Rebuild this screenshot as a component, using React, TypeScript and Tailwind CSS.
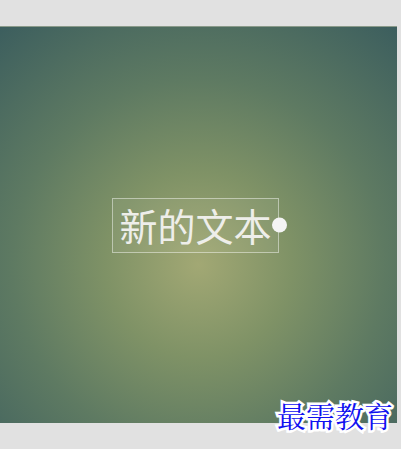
export default function App() {
  return (
    <div className="relative w-[401px] h-[449px] bg-[#e1e1e1] pt-[26px]">
      {/* Canvas */}
      <div className="w-[397px] h-[397px] flex items-center justify-center bg-[radial-gradient(circle_at_50%_60%,#a2a874_0%,#7f9266_30%,#5e7a62_60%,#3c5e5e_100%)] border-t border-[#8a9a8a]">
        <div className="relative flex items-center justify-center w-[167px] h-[55px] border border-white/45 bg-white/5 -translate-x-[3px]">
          <span className="text-[38px] leading-none text-[#eeeeea] font-['Noto_Sans_CJK_SC',sans-serif]">
            新的文本
          </span>
          <span className="absolute right-[-9px] top-1/2 -translate-y-1/2 w-[15px] h-[15px] rounded-full bg-[#f4f4f4]" />
        </div>
      </div>

      {/* Watermark */}
      <div className="absolute left-[277px] top-[401px] text-[29px] leading-none font-['Noto_Serif_CJK_SC','Noto_Sans_CJK_SC',serif] text-[#1010f0] [-webkit-text-stroke:5px_#ffffff] [paint-order:stroke_fill]">
        最需教育
      </div>
    </div>
  );
}
